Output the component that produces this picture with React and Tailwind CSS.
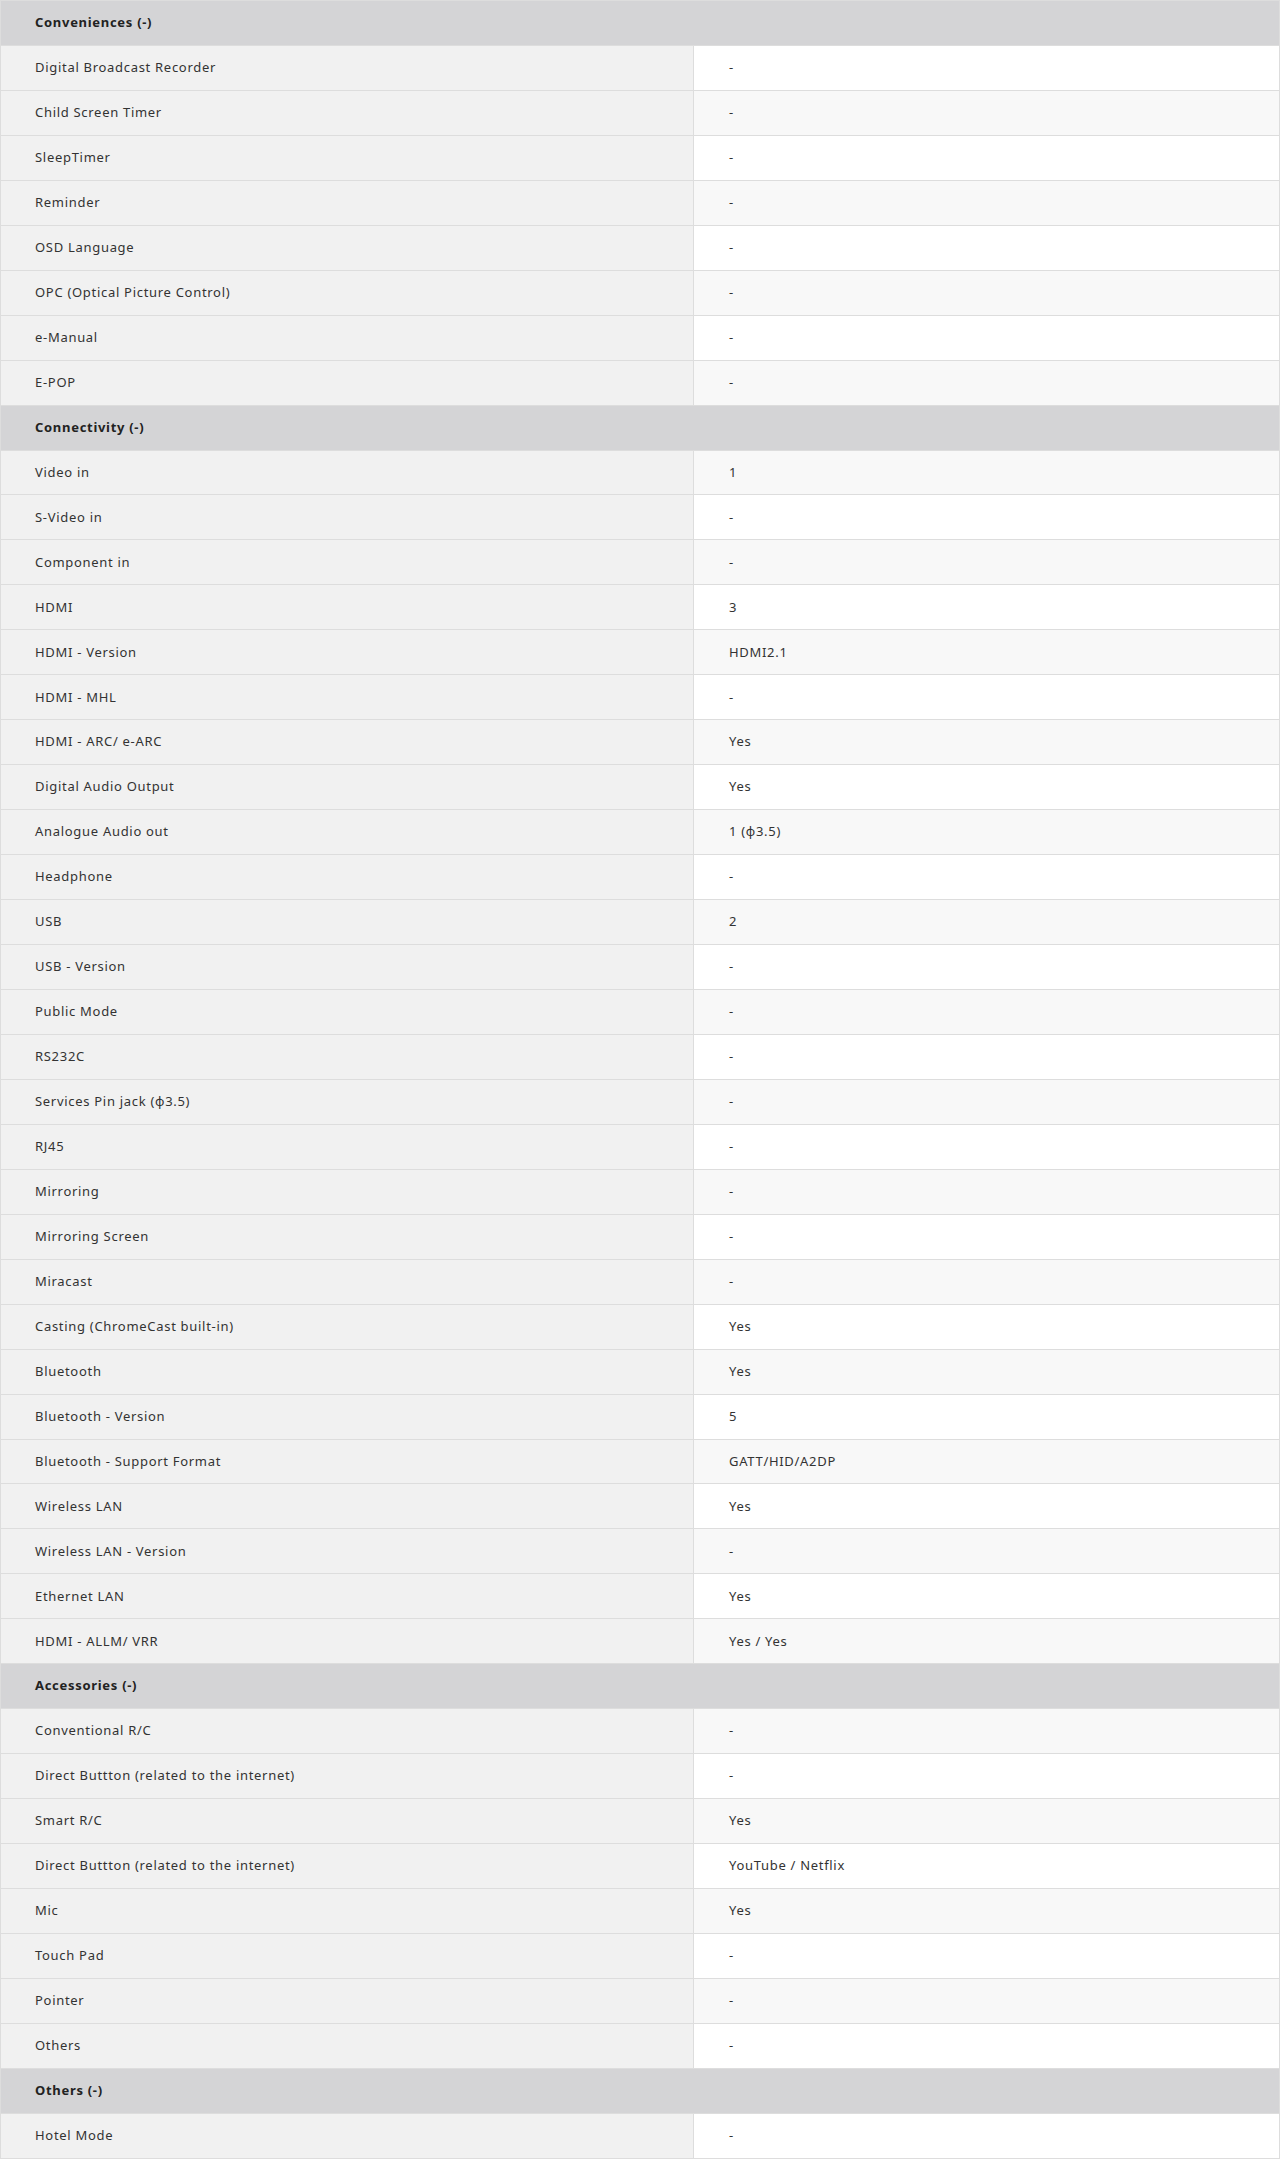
import React from 'react';

const sections = [
  {
    title: 'Conveniences',
    rows: [
      ['Digital Broadcast Recorder', '-'],
      ['Child Screen Timer', '-'],
      ['SleepTimer', '-'],
      ['Reminder', '-'],
      ['OSD Language', '-'],
      ['OPC (Optical Picture Control)', '-'],
      ['e-Manual', '-'],
      ['E-POP', '-'],
    ],
  },
  {
    title: 'Connectivity',
    rows: [
      ['Video in', '1'],
      ['S-Video in', '-'],
      ['Component in', '-'],
      ['HDMI', '3'],
      ['HDMI - Version', 'HDMI2.1'],
      ['HDMI - MHL', '-'],
      ['HDMI - ARC/ e-ARC', 'Yes'],
      ['Digital Audio Output', 'Yes'],
      ['Analogue Audio out', '1 (ϕ3.5)'],
      ['Headphone', '-'],
      ['USB', '2'],
      ['USB - Version', '-'],
      ['Public Mode', '-'],
      ['RS232C', '-'],
      ['Services Pin jack (ϕ3.5)', '-'],
      ['RJ45', '-'],
      ['Mirroring', '-'],
      ['Mirroring Screen', '-'],
      ['Miracast', '-'],
      ['Casting (ChromeCast built-in)', 'Yes'],
      ['Bluetooth', 'Yes'],
      ['Bluetooth - Version', '5'],
      ['Bluetooth - Support Format', 'GATT/HID/A2DP'],
      ['Wireless LAN', 'Yes'],
      ['Wireless LAN - Version', '-'],
      ['Ethernet LAN', 'Yes'],
      ['HDMI - ALLM/ VRR', 'Yes / Yes'],
    ],
  },
  {
    title: 'Accessories',
    rows: [
      ['Conventional R/C', '-'],
      ['Direct Buttton (related to the internet)', '-'],
      ['Smart R/C', 'Yes'],
      ['Direct Buttton (related to the internet)', 'YouTube / Netflix'],
      ['Mic', 'Yes'],
      ['Touch Pad', '-'],
      ['Pointer', '-'],
      ['Others', '-'],
    ],
  },
  {
    title: 'Others',
    rows: [['Hotel Mode', '-']],
  },
];

export default function App() {
  // flatten so row striping follows the overall row index, headers included
  const items = [];
  sections.forEach((s) => {
    items.push({ type: 'head', title: s.title });
    s.rows.forEach((r) => items.push({ type: 'row', label: r[0], value: r[1] }));
  });

  return (
    <div
      className="w-[1280px] bg-white text-[13px] tracking-[0.7px] text-[#333]"
      style={{ fontFamily: '"Noto Sans", "Liberation Sans", sans-serif' }}
    >
      <div className="border-t border-l border-r border-[#dddddd]">
        {items.map((it, idx) =>
          it.type === 'head' ? (
            <div
              key={idx}
              className="h-[44.96px] flex items-center pl-[34px] bg-[#d4d4d6] border-b border-[#dddddd] font-bold text-[#222]"
            >
              {it.title} (-)
            </div>
          ) : (
            <div key={idx} className="h-[44.96px] flex border-b border-[#dddddd]">
              <div className="w-[693px] flex items-center pl-[34px] bg-[#f1f1f1] border-r border-[#dddddd]">
                {it.label}
              </div>
              <div
                className={`flex-1 flex items-center pl-[35px] ${
                  idx % 2 === 1 ? 'bg-white' : 'bg-[#f8f8f8]'
                }`}
              >
                {it.value}
              </div>
            </div>
          )
        )}
      </div>
    </div>
  );
}
